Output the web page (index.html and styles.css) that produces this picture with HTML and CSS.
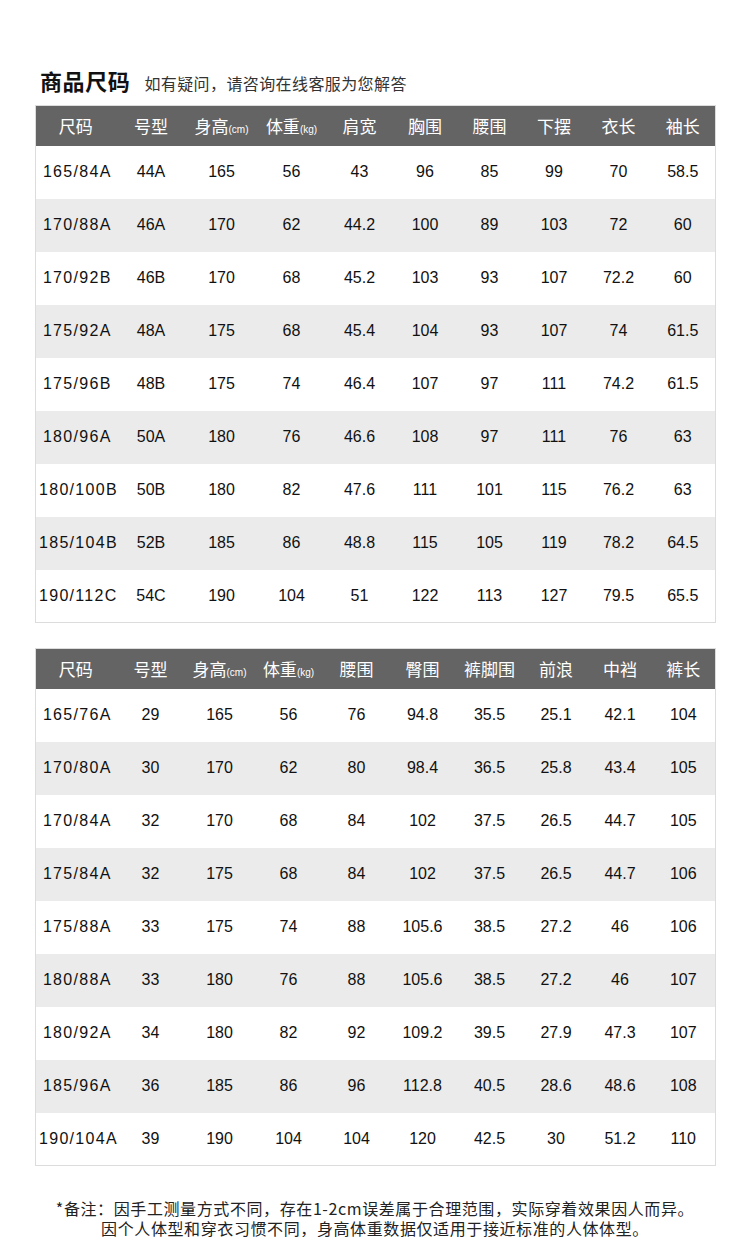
FILE: index.html
```html
<!DOCTYPE html>
<html lang="zh">
<head>
<meta charset="utf-8">
<title>商品尺码</title>
<link rel="stylesheet" href="styles.css">
</head>
<body>
<div class="page">
  <div class="title">
    <span class="title-main">商品尺码</span>
    <span class="title-sub">如有疑问，请咨询在线客服为您解答</span>
  </div>

  <table class="size-table t1">
    <colgroup>
      <col style="width:80px"><col style="width:71px"><col style="width:70px"><col style="width:70px"><col style="width:66px"><col style="width:65px"><col style="width:64px"><col style="width:65px"><col style="width:64px"><col style="width:65px">
    </colgroup>
    <thead>
      <tr><th>尺码</th><th>号型</th><th>身高<small>(cm)</small></th><th>体重<small>(kg)</small></th><th>肩宽</th><th>胸围</th><th>腰围</th><th>下摆</th><th>衣长</th><th>袖长</th></tr>
    </thead>
    <tbody>
      <tr><td class="sz">165/84A</td><td>44A</td><td>165</td><td>56</td><td>43</td><td>96</td><td>85</td><td>99</td><td>70</td><td>58.5</td></tr>
      <tr><td class="sz">170/88A</td><td>46A</td><td>170</td><td>62</td><td>44.2</td><td>100</td><td>89</td><td>103</td><td>72</td><td>60</td></tr>
      <tr><td class="sz">170/92B</td><td>46B</td><td>170</td><td>68</td><td>45.2</td><td>103</td><td>93</td><td>107</td><td>72.2</td><td>60</td></tr>
      <tr><td class="sz">175/92A</td><td>48A</td><td>175</td><td>68</td><td>45.4</td><td>104</td><td>93</td><td>107</td><td>74</td><td>61.5</td></tr>
      <tr><td class="sz">175/96B</td><td>48B</td><td>175</td><td>74</td><td>46.4</td><td>107</td><td>97</td><td>111</td><td>74.2</td><td>61.5</td></tr>
      <tr><td class="sz">180/96A</td><td>50A</td><td>180</td><td>76</td><td>46.6</td><td>108</td><td>97</td><td>111</td><td>76</td><td>63</td></tr>
      <tr><td class="sz">180/100B</td><td>50B</td><td>180</td><td>82</td><td>47.6</td><td>111</td><td>101</td><td>115</td><td>76.2</td><td>63</td></tr>
      <tr><td class="sz">185/104B</td><td>52B</td><td>185</td><td>86</td><td>48.8</td><td>115</td><td>105</td><td>119</td><td>78.2</td><td>64.5</td></tr>
      <tr><td class="sz">190/112C</td><td>54C</td><td>190</td><td>104</td><td>51</td><td>122</td><td>113</td><td>127</td><td>79.5</td><td>65.5</td></tr>
    </tbody>
  </table>

  <table class="size-table t2">
    <colgroup>
      <col style="width:80px"><col style="width:70px"><col style="width:68px"><col style="width:70px"><col style="width:66px"><col style="width:66px"><col style="width:68px"><col style="width:65px"><col style="width:63px"><col style="width:64px">
    </colgroup>
    <thead>
      <tr><th>尺码</th><th>号型</th><th>身高<small>(cm)</small></th><th>体重<small>(kg)</small></th><th>腰围</th><th>臀围</th><th>裤脚围</th><th>前浪</th><th>中裆</th><th>裤长</th></tr>
    </thead>
    <tbody>
      <tr><td class="sz">165/76A</td><td>29</td><td>165</td><td>56</td><td>76</td><td>94.8</td><td>35.5</td><td>25.1</td><td>42.1</td><td>104</td></tr>
      <tr><td class="sz">170/80A</td><td>30</td><td>170</td><td>62</td><td>80</td><td>98.4</td><td>36.5</td><td>25.8</td><td>43.4</td><td>105</td></tr>
      <tr><td class="sz">170/84A</td><td>32</td><td>170</td><td>68</td><td>84</td><td>102</td><td>37.5</td><td>26.5</td><td>44.7</td><td>105</td></tr>
      <tr><td class="sz">175/84A</td><td>32</td><td>175</td><td>68</td><td>84</td><td>102</td><td>37.5</td><td>26.5</td><td>44.7</td><td>106</td></tr>
      <tr><td class="sz">175/88A</td><td>33</td><td>175</td><td>74</td><td>88</td><td>105.6</td><td>38.5</td><td>27.2</td><td>46</td><td>106</td></tr>
      <tr><td class="sz">180/88A</td><td>33</td><td>180</td><td>76</td><td>88</td><td>105.6</td><td>38.5</td><td>27.2</td><td>46</td><td>107</td></tr>
      <tr><td class="sz">180/92A</td><td>34</td><td>180</td><td>82</td><td>92</td><td>109.2</td><td>39.5</td><td>27.9</td><td>47.3</td><td>107</td></tr>
      <tr><td class="sz">185/96A</td><td>36</td><td>185</td><td>86</td><td>96</td><td>112.8</td><td>40.5</td><td>28.6</td><td>48.6</td><td>108</td></tr>
      <tr><td class="sz">190/104A</td><td>39</td><td>190</td><td>104</td><td>104</td><td>120</td><td>42.5</td><td>30</td><td>51.2</td><td>110</td></tr>
    </tbody>
  </table>

  <div class="notes">
    <p>*备注：因手工测量方式不同，存在1-2cm误差属于合理范围，实际穿着效果因人而异。</p>
    <p>因个人体型和穿衣习惯不同，身高体重数据仅适用于接近标准的人体体型。</p>
  </div>
</div>
</body>
</html>
```

FILE: styles.css
```css
* { box-sizing: border-box; }
html, body { margin: 0; padding: 0; background: #fff; }
body {
  font-family: "Liberation Sans", Arial, "Noto Sans CJK SC", sans-serif;
  color: #111;
}
.page {
  width: 750px;
  padding: 64px 35px 0 35px;
}
.title {
  display: flex;
  align-items: baseline;
  padding-left: 5px;
  height: 41px;
}
.title-main {
  font-family: "Noto Sans CJK SC", sans-serif;
  font-weight: 700;
  font-size: 22px;
  color: #111;
  letter-spacing: 0.6px;
}
.title-sub {
  font-family: "Noto Sans CJK SC", sans-serif;
  font-size: 16px;
  color: #333;
  margin-left: 14px;
  letter-spacing: 0.4px;
}
.size-table {
  width: 680px;
  table-layout: fixed;
  border-collapse: collapse;
  border: 1px solid #dcdcdc;
}
.size-table.t2 { margin-top: 25px; }
.size-table th {
  background: #646464;
  color: #fff;
  font-family: "Noto Sans CJK SC", sans-serif;
  font-weight: 400;
  font-size: 17px;
  height: 40px;
  padding: 0;
  text-align: center;
  white-space: nowrap;
}
.size-table th small {
  font-family: "Liberation Sans", Arial, sans-serif;
  font-size: 10px;
}
.size-table td {
  height: 53px;
  padding: 0;
  text-align: center;
  font-size: 16px;
  color: #111;
  white-space: nowrap;
}
.size-table td.sz { letter-spacing: 1.3px; padding-left: 3px; }
.size-table tbody tr:nth-child(even) td { background: #ebebeb; }
.notes {
  margin-top: 32px;
  text-align: center;
  font-family: "Noto Sans CJK SC", sans-serif;
  font-size: 16px;
  letter-spacing: 0.6px;
  color: #222;
  line-height: 20px;
}
.notes p { margin: 0; }
```
